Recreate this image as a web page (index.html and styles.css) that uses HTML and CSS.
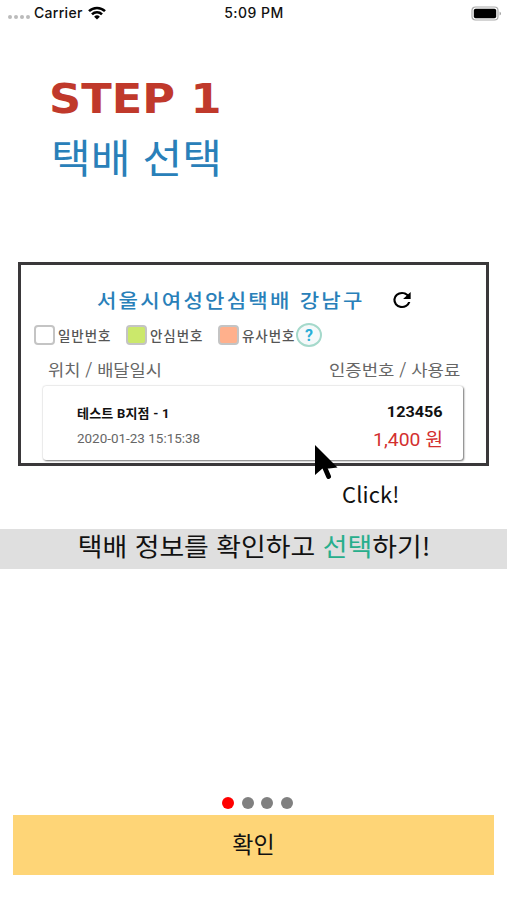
FILE: index.html
```html
<!DOCTYPE html>
<html lang="ko">
<head>
    <meta charset="UTF-8">
    <meta name="viewport" content="width=device-width, initial-scale=1.0">
    <title>택배 선택</title>
    <link rel="stylesheet" href="styles.css">
</head>
<body>
    <div class="status-bar">
        <div class="status-left">
            <span class="signal"><i></i><i></i><i></i><i></i></span>
            <span class="carrier">Carrier</span>
            <svg class="wifi" width="18" height="14" viewBox="0 0 18 14" fill="none" stroke="#000" stroke-width="2.5">
                <path d="M1 5.2a11.3 11.3 0 0 1 16 0"/>
                <path d="M4 8.3a7 7 0 0 1 10 0"/>
                <path d="M9 13.6L6.1 10.7a4.1 4.1 0 0 1 5.8 0z" fill="#000" stroke="none"/>
            </svg>
        </div>
        <span class="time">5:09 PM</span>
        <svg class="battery" width="31" height="15" viewBox="0 0 31 15">
            <rect x="1" y="1" width="26" height="13" rx="3.5" fill="#fff" stroke="#aaa" stroke-width="1.2"/>
            <rect x="2.8" y="2.8" width="22.4" height="9.4" rx="1.8" fill="#000"/>
            <path d="M28.6 5.4c1.8.8 1.8 3.4 0 4.2z" fill="#999"/>
        </svg>
    </div>

    <main>
        <h1 class="step">STEP 1</h1>
        <h2 class="step-title">택배 선택</h2>

        <section class="preview">
            <div class="preview-head">
                <span class="place">서울시여성안심택배 강남구</span>
                <svg class="refresh" width="26" height="24" viewBox="0 0 24 24" preserveAspectRatio="none">
                    <path d="M17.65 6.35A7.96 7.96 0 0 0 12 4a8 8 0 1 0 7.73 10h-2.08A6 6 0 1 1 12 6c1.66 0 3.14.69 4.22 1.78L13 11h7V4z"/>
                </svg>
            </div>

            <div class="legend">
                <span class="box white"></span><span class="name">일반번호</span>
                <span class="box green"></span><span class="name">안심번호</span>
                <span class="box orange"></span><span class="name">유사번호</span>
                <span class="help">?</span>
            </div>

            <div class="columns">
                <span class="col-left">위치 / 배달일시</span>
                <span class="col-right">인증번호 / 사용료</span>
            </div>

            <div class="card">
                <div class="card-row">
                    <span class="branch">테스트 B지점 - 1</span>
                    <span class="code">123456</span>
                </div>
                <div class="card-row">
                    <span class="date">2020-01-23 15:15:38</span>
                    <span class="price">1,400 원</span>
                </div>
            </div>

            <svg class="cursor" width="25" height="38" viewBox="0 0 25 38">
                <path d="M1 1V31L8.5 24.5L15 24.5L23.5 23.5Z" fill="#000"/>
                <path d="M10.5 23L14.6 32.5" fill="none" stroke="#000" stroke-width="4.8" stroke-linecap="round"/>
            </svg>
        </section>

        <p class="click">Click!</p>
        <p class="guide"><span>택배 정보를 확인하고 <em>선택</em>하기!</span></p>
    </main>

    <footer>
        <div class="dots"><i class="on"></i><i></i><i></i><i></i></div>
        <button class="confirm" type="button">확인</button>
    </footer>
</body>
</html>
```
FILE: styles.css
```css
/* 공통 */
* {
    box-sizing: border-box;
}

body {
    display: flex;
    flex-direction: column;
    height: 900px;
    margin: 0;
    background: #fff;
    color: #111;
    font-family: "Noto Sans CJK KR", sans-serif;
    overflow: hidden;
}

h1, h2, p {
    margin: 0;
    font-weight: normal;
    white-space: nowrap;
}

/* 상태바 */
.status-bar {
    display: grid;
    grid-template-columns: 1fr auto 1fr;
    align-items: center;
    height: 26px;
    padding: 0 5px 0 8px;
    font: 500 14px/26px Inter, sans-serif;
    letter-spacing: 0.3px;
}

.time {
    margin-right: 2px;
    letter-spacing: 0.5px;
}

.status-left {
    display: flex;
    align-items: center;
}

.signal {
    display: flex;
    gap: 2px;
    width: 26px;
    padding-top: 8px;
}

.signal i {
    width: 4px;
    height: 4px;
    border-radius: 50%;
    background: #bbb;
}

.wifi {
    margin-left: 5px;
}

.battery {
    justify-self: end;
}

/* 제목 */
main {
    flex: 1;
}

.step {
    width: 200px;
    margin: 49px 0 0 49px;
    color: #c0392b;
    font: bold 41px/48px "DejaVu Sans", sans-serif;
    transform: scaleX(1.09);
    transform-origin: left;
}

.step-title {
    width: 200px;
    margin: 3px 0 0 51px;
    color: #2980b9;
    font-size: 40px;
    line-height: 60px;
    transform: scaleX(1.08);
    transform-origin: left;
}

/* 택배 목록 */
.preview {
    position: relative;
    width: 471px;
    height: 204px;
    margin: 76px 0 0 18px;
    border: 3px solid #3a383a;
}

.preview-head {
    display: flex;
    align-items: center;
    height: 28px;
    margin: 20px 0 0 76px;
}

.place {
    width: 292px;
    color: #2980b9;
    font-size: 19px;
    font-weight: 500;
    letter-spacing: 2px;
    white-space: nowrap;
    transform: scaleX(1.11);
    transform-origin: left;
}

.refresh {
    margin-top: 2px;
}

.legend {
    display: flex;
    align-items: center;
    height: 26px;
    margin: 9px 0 0 13px;
}

.box {
    width: 21px;
    height: 20px;
    border: 2px solid #c4c4c4;
    border-radius: 4px;
}

.green {
    background: #cbe86b;
}

.orange {
    background: #ffb08c;
}

.name {
    width: 71px;
    padding-left: 3px;
    color: #555;
    font-size: 13.5px;
    font-weight: 500;
    letter-spacing: 0.9px;
    white-space: nowrap;
}

.orange + .name {
    width: 57px;
}

.help {
    width: 26px;
    height: 24px;
    border: 2px solid #a5d9cb;
    border-radius: 50%;
    background: #f5f9fa;
    color: #2baed8;
    font: bold 16px/21px Roboto, sans-serif;
    text-align: center;
}

.columns {
    display: flex;
    justify-content: space-between;
    height: 24px;
    margin: 9px 26px 0 27px;
    color: #666;
    font-size: 16px;
    line-height: 24px;
    white-space: nowrap;
}

.col-left {
    transform: scaleX(1.1);
    transform-origin: left;
}

.col-right {
    transform: scaleX(1.11);
    transform-origin: right;
}

.card {
    width: 420px;
    height: 74px;
    margin: 5px 0 0 22px;
    padding: 13px 20px 0 34px;
    border-radius: 3px;
    background: #fff;
    box-shadow: 1px 1px 2px #777, 0 0 2px #ccc;
}

.card-row {
    display: flex;
    align-items: center;
    justify-content: space-between;
    height: 26px;
    font-family: Roboto, "Noto Sans CJK KR", sans-serif;
    white-space: nowrap;
}

.branch {
    font-size: 13px;
    font-weight: bold;
    letter-spacing: 0.2px;
}

.code {
    font-size: 15px;
    font-weight: bold;
    transform: scaleX(1.08);
    transform-origin: right;
}

.date {
    color: #666;
    font-size: 13px;
    transform: scaleX(1.035);
    transform-origin: left;
}

.price {
    color: #d32f2f;
    font-size: 18px;
    transform: scaleX(1.075);
    transform-origin: right;
}

.cursor {
    position: absolute;
    left: 293px;
    top: 179px;
}

/* 안내 문구 */
.click {
    margin: 11px 0 0 342px;
    font-size: 22px;
    line-height: 32px;
    letter-spacing: 0.1px;
}

.guide {
    height: 40px;
    margin-top: 20px;
    padding-left: 2px;
    background: #dfdfdf;
    font-size: 25px;
    line-height: 33px;
    text-align: center;
}

.guide span {
    display: inline-block;
    transform: scaleX(1.075);
}

.guide em {
    color: #27ae8c;
    font-style: normal;
}

/* 하단 버튼 */
footer {
    padding: 0 13px 25px;
}

.dots {
    display: flex;
    justify-content: center;
    gap: 7.5px;
    margin: 0 0 6px 8px;
}

.dots i {
    width: 12px;
    height: 12px;
    border-radius: 50%;
    background: #808080;
}

.dots .on {
    background: #f00;
}

.confirm {
    display: block;
    width: 100%;
    height: 60px;
    padding: 0 0 4px;
    border: 0;
    background: #fed577;
    color: #111;
    font: 23px/56px "Noto Sans CJK KR", sans-serif;
}
```
